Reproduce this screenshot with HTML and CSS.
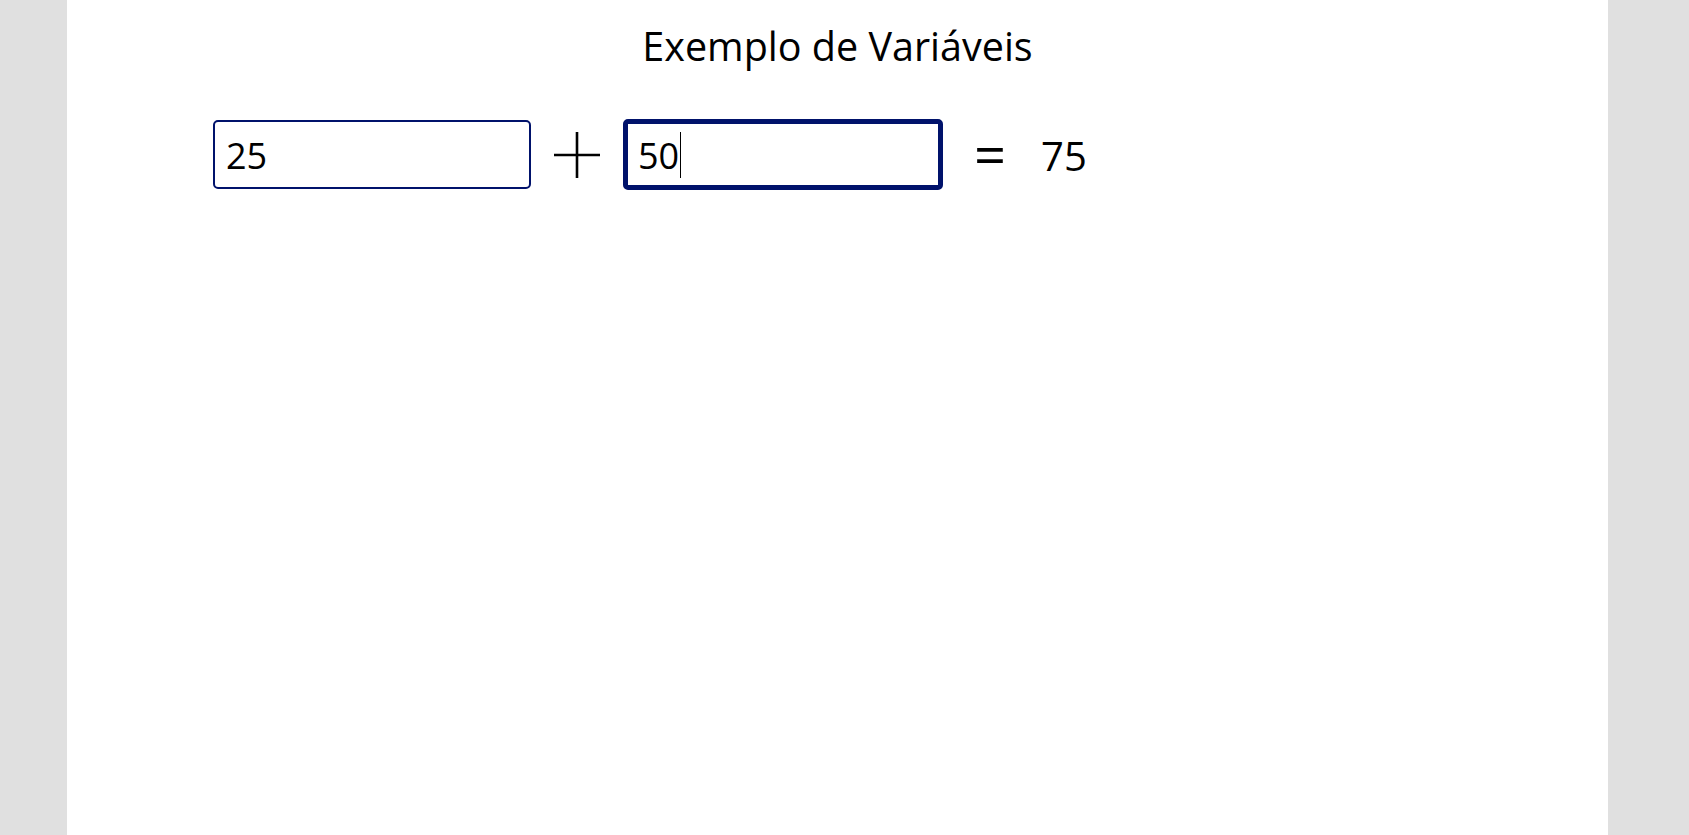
FILE: index.html
```html
<!DOCTYPE html>
<html lang="pt">
<head>
<meta charset="utf-8">
<title>Exemplo de Variáveis</title>
<link rel="stylesheet" href="styles.css">
</head>
<body>
<main class="canvas">
  <h1 class="title">Exemplo de Variáveis</h1>
  <div class="row">
    <div class="field field-a">25</div>
    <svg class="plus" width="48" height="48" viewBox="0 0 48 48" aria-hidden="true">
      <path d="M24 1V47M1 24H47" stroke="#000" stroke-width="2.6" fill="none"/>
    </svg>
    <div class="field field-b">50<span class="caret"></span></div>
    <span class="equals">=</span>
    <span class="result">75</span>
  </div>
</main>
</body>
</html>
```

FILE: styles.css
```css
html, body {
  margin: 0;
  padding: 0;
  background: #e0e0e0;
  height: 100%;
  overflow: hidden;
}

.canvas {
  margin-left: 67px;
  width: 1541px;
  height: 835px;
  background: #ffffff;
  font-family: "Open Sans", "Noto Sans", sans-serif;
  color: #000;
  padding-top: 21px;
  box-sizing: border-box;
}

.title {
  margin: 0;
  font-size: 39.5px;
  font-weight: 400;
  line-height: 50px;
  height: 50px;
  text-align: center;
}

.row {
  display: flex;
  align-items: center;
  margin-top: 48px;
  padding-left: 146px;
}

.field {
  box-sizing: border-box;
  background: #fff;
  border-style: solid;
  border-color: #00126b;
  border-radius: 5px;
  font-size: 36px;
  line-height: 48px;
  display: flex;
  align-items: center;
}

.field-a {
  width: 318px;
  height: 69px;
  border-width: 2px;
  padding-left: 11px;
  padding-top: 2px;
}

.field-b {
  width: 320px;
  height: 71px;
  border-width: 5px;
  padding-left: 10px;
  padding-top: 2px;
  margin-left: 22px;
}

.plus {
  margin-left: 22px;
  display: block;
}

.caret {
  display: inline-block;
  width: 1px;
  height: 46px;
  background: #000;
  margin-left: 1px;
  margin-top: -2px;
}

.equals {
  margin-left: 31px;
  font-size: 56px;
  line-height: 60px;
  padding-bottom: 4px;
}

.result {
  margin-left: 35px;
  font-size: 40px;
  line-height: 50px;
  padding-top: 2px;
}
```
